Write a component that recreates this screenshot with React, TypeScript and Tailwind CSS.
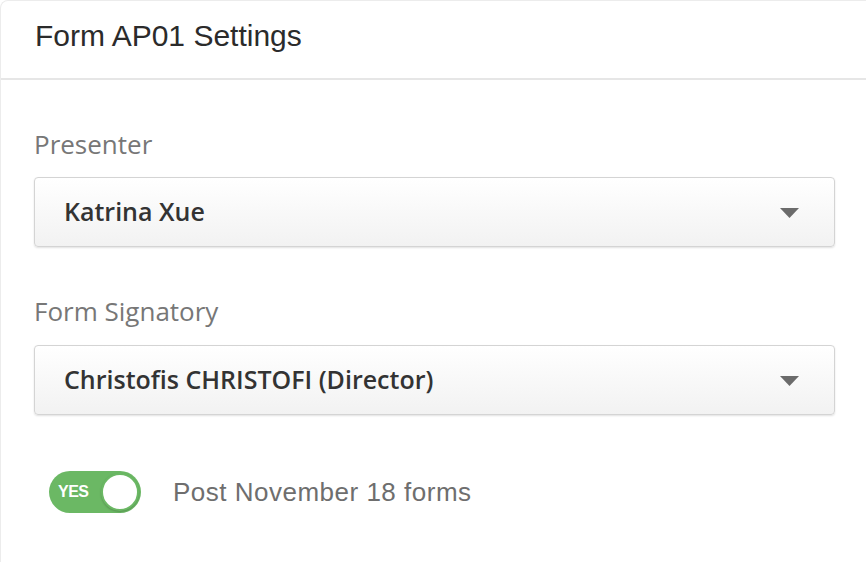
import React from 'react';

const SelectBox: React.FC<{ value: string }> = ({ value }) => (
  <div className="flex h-[70px] items-center justify-between rounded-[4px] border border-[#d4d4d4] bg-gradient-to-b from-white to-[#f2f2f2] pl-[29px] pr-[35px] shadow-[0_1px_2px_rgba(0,0,0,0.12)]">
    <span className="text-[25px] font-semibold text-[#333] font-['Open_Sans',sans-serif]">{value}</span>
    <svg width="19" height="10" viewBox="0 0 19 10" className="mt-[1px]">
      <path d="M0 0 H19 L9.5 10 Z" fill="#6b6b6b" />
    </svg>
  </div>
);

export default function App() {
  return (
    <div className="h-[562px] w-[866px] overflow-hidden bg-white">
      <div className="h-[600px] w-[900px] rounded-tl-[8px] border-l border-t border-[#ececec] bg-white">
        <div className="h-[79px] border-b-2 border-[#e6e6e6] pl-[34px] pt-[20px]">
          <h1 className="text-[30px] leading-[30px] text-[#2b2b2b] font-['Liberation_Sans',sans-serif]">Form AP01 Settings</h1>
        </div>
        <div className="w-[834px] pl-[33px] pt-[49px]">
          <label className="block text-[26px] leading-[30px] text-[#777] font-['Open_Sans',sans-serif]">Presenter</label>
          <div className="mt-[18px]">
            <SelectBox value="Katrina Xue" />
          </div>
          <label className="mt-[49px] block text-[26px] leading-[30px] text-[#777] font-['Open_Sans',sans-serif]">Form Signatory</label>
          <div className="mt-[19px]">
            <SelectBox value="Christofis CHRISTOFI (Director)" />
          </div>
          <div className="mt-[56px] flex items-center pl-[15px]">
            <div className="flex h-[42px] w-[92px] items-center justify-between rounded-full bg-[#6bb864] pl-[9px] pr-[2px]">
              <span className="text-[16px] font-bold text-white font-['Liberation_Sans',sans-serif] tracking-[-0.5px]">YES</span>
              <span className="h-[38px] w-[38px] rounded-full border-2 border-[#6bb864] bg-white shadow-[0_1px_2px_rgba(0,0,0,0.2)]" />
            </div>
            <span className="ml-[32px] text-[26px] text-[#6e6e6e] font-['Liberation_Sans',sans-serif] tracking-[0.5px]">Post November 18 forms</span>
          </div>
        </div>
      </div>
    </div>
  );
}
